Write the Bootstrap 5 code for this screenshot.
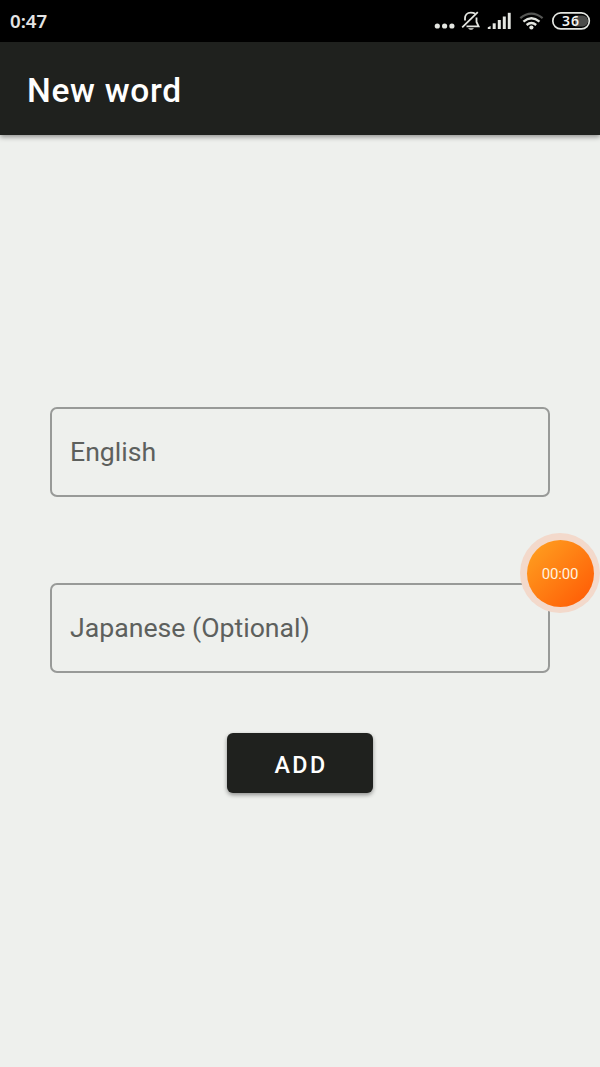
<!DOCTYPE html>
<html lang="en">
<head>
<meta charset="utf-8">
<meta name="viewport" content="width=device-width, initial-scale=1">
<title>New word</title>
<link rel="stylesheet" href="https://cdn.jsdelivr.net/npm/bootstrap@5.3.0/dist/css/bootstrap.min.css">
<style>
body{font-family:Roboto,sans-serif;background:#eef0ed;height:1067px;overflow:hidden}
.status-bar{height:42px;background:#000;color:#e4e4e4;padding:0 9px 0 10px}
.clock{font:600 18.7px/1 "Noto Sans",sans-serif;padding-top:1px}
.app-bar{height:93px;background:#1f211e;padding:4px 27px 0;box-shadow:0 2px 5px rgba(0,0,0,.4)}
.app-title{font-size:33.5px;font-weight:500;letter-spacing:.7px;line-height:1;color:#fff}
.word-form{padding:272px 50px 0}
.word-input.form-control{height:90px;border:2px solid #989a98;border-radius:7px;background:transparent;padding:0 18px;font-size:26.67px;color:#5d605d}
.word-input::placeholder{color:#5d605d;opacity:1}
.word-gap{margin-bottom:86px}
.add-btn.btn{width:146px;height:60px;margin-top:60px;border:0;border-radius:6px;background:#1f211e;color:#fff;font-size:23.3px;font-weight:500;letter-spacing:2.4px;padding:4px 0 0 2px;box-shadow:0 2px 4px rgba(0,0,0,.4)}
.recorder{left:520px;top:533px;width:80px;height:80px;background:#f3d9cb}
.recorder-face{width:67px;height:67px;background:linear-gradient(135deg,#ff981d 15%,#ff6208 85%);color:#fff2df;font-size:15px;font-weight:400;letter-spacing:-.2px;padding-top:2px}
</style>
</head>
<body class="position-relative">
<header>
  <div class="status-bar d-flex align-items-center justify-content-between">
    <span class="clock">0:47</span>
    <svg width="158" height="42" viewBox="433 0 158 42" fill="none" stroke="#e4e6e1" aria-hidden="true">
      <g fill="#e4e6e1" stroke="none"><circle cx="437.3" cy="26" r="2.6"/><circle cx="444.6" cy="26" r="2.6"/><circle cx="451.9" cy="26" r="2.6"/></g>
      <!-- muted bell -->
      <path d="M475 13.6C473.7 12.8 472.4 12.6 470.8 12.6C467 12.6 465 15.3 465 18.3V20.5M476.5 17.5V22L478.6 26.3H466.5M462.2 27.3L477.8 12.2" stroke-width="1.8"/>
      <path d="M468 28.2H474Q471 31.2 468 28.2Z" fill="#e4e6e1" stroke="none"/>
      <!-- signal strength -->
      <g fill="#e4e6e1" stroke="none"><path d="M487.8 29V27.2L490.6 26V29Z"/><rect x="492.7" y="23.3" width="3" height="5.7"/><rect x="497.8" y="20" width="3" height="9"/><rect x="502.8" y="16.5" width="3" height="12.5"/><rect x="507.8" y="12.8" width="2.9" height="16.2"/></g>
      <!-- wifi -->
      <path d="M520.3 18.1Q531.3 9.2 542.6 18.1" stroke="#555654" stroke-width="2.3"/>
      <path d="M523.4 21.6Q531.4 14.9 539.5 21.6M526.6 25Q531.4 21 536.2 25" stroke-width="2.3"/>
      <circle cx="531.4" cy="27.5" r="2.1" fill="#e4e6e1" stroke="none"/>
      <!-- battery -->
      <path d="M575 15.6H582.7A5.4 5.4 0 0 1 582.7 26.4H575Z" fill="#4b4c4a" stroke="none"/>
      <rect x="552.8" y="12.9" width="36.5" height="16" rx="8" stroke-width="1.7"/>
      <text x="570.6" y="26" text-anchor="middle" fill="#f1f1ef" stroke="none" font-family="Noto Sans" font-size="14" font-weight="600" textLength="17" lengthAdjust="spacing">36</text>
    </svg>
  </div>
  <nav class="app-bar d-flex align-items-center"><h1 class="app-title m-0">New word</h1></nav>
</header>
<main>
  <form class="word-form d-flex flex-column align-items-center">
    <input class="word-input word-gap form-control" type="text" placeholder="English" aria-label="English">
    <input class="word-input form-control" type="text" placeholder="Japanese (Optional)" aria-label="Japanese (Optional)">
    <button class="add-btn btn" type="button">ADD</button>
  </form>
</main>
<!-- floating screen recorder timer -->
<div class="recorder position-absolute rounded-circle d-flex align-items-center justify-content-center">
  <div class="recorder-face rounded-circle d-flex align-items-center justify-content-center">00:00</div>
</div>
<script src="https://cdn.jsdelivr.net/npm/bootstrap@5.3.0/dist/js/bootstrap.bundle.min.js"></script>
</body>
</html>
